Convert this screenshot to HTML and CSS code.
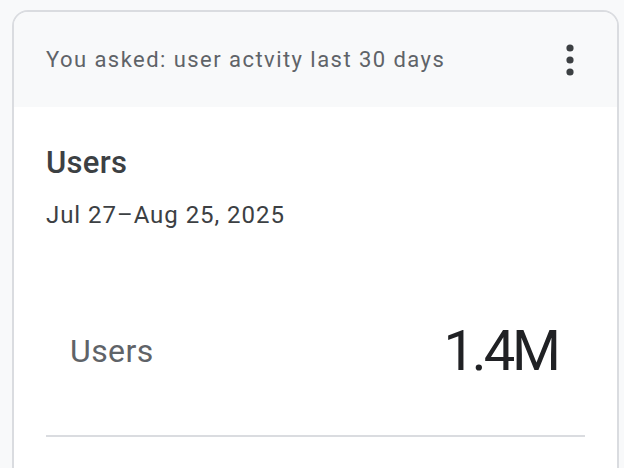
FILE: index.html
```html
<!DOCTYPE html>
<html lang="en">
<head>
<meta charset="utf-8">
<title>Users</title>
<link rel="stylesheet" href="styles.css">
</head>
<body>
<div class="card">
  <div class="card-header">
    <span class="query">You asked: user actvity last 30 days</span>
    <svg class="kebab" width="30" height="36" viewBox="0 0 30 36" aria-label="More options">
      <circle cx="15" cy="6" r="3.6" fill="#3c4043"/>
      <circle cx="15" cy="18" r="3.6" fill="#3c4043"/>
      <circle cx="15" cy="30" r="3.6" fill="#3c4043"/>
    </svg>
  </div>
  <div class="card-body">
    <div class="title">Users</div>
    <div class="range">Jul 27–Aug 25, 2025</div>
    <div class="metric-row">
      <span class="metric-label">Users</span>
      <span class="metric-value">1.4M</span>
    </div>
  </div>
</div>
</body>
</html>
```

FILE: styles.css
```css
html, body {
  margin: 0;
  height: 100%;
  overflow: hidden;
}
body {
  background: #f8f9fa;
  font-family: Roboto, "Liberation Sans", sans-serif;
  padding: 10px 5px 0 12px;
  box-sizing: border-box;
}
.card {
  border: 2px solid #dadce0;
  border-radius: 16px;
  background: #ffffff;
  min-height: 520px;
  overflow: hidden;
}
.card-header {
  height: 95px;
  background: #f8f9fa;
  display: flex;
  align-items: center;
  justify-content: space-between;
  padding: 0 32px;
}
.query {
  font-size: 22px;
  color: #5f6368;
  letter-spacing: 1.45px;
}
.kebab {
  display: block;
}
.card-body {
  padding: 38px 32px 0;
}
.title {
  font-size: 31px;
  line-height: 36px;
  font-weight: 500;
  color: #3c4043;
  letter-spacing: 0.3px;
}
.range {
  margin-top: 18px;
  font-size: 24px;
  line-height: 32px;
  color: #3c4043;
  letter-spacing: 0.95px;
}
.metric-row {
  margin-top: 64px;
  display: flex;
  align-items: center;
  justify-content: space-between;
  padding: 24px 24px 52px;
  border-bottom: 2px solid #dadce0;
}
.metric-label {
  font-size: 32px;
  line-height: 64px;
  color: #5f6368;
  letter-spacing: 0.4px;
}
.metric-value {
  font-size: 56px;
  line-height: 64px;
  color: #202124;
  letter-spacing: -3px;
  padding-right: 3px;
}
```
